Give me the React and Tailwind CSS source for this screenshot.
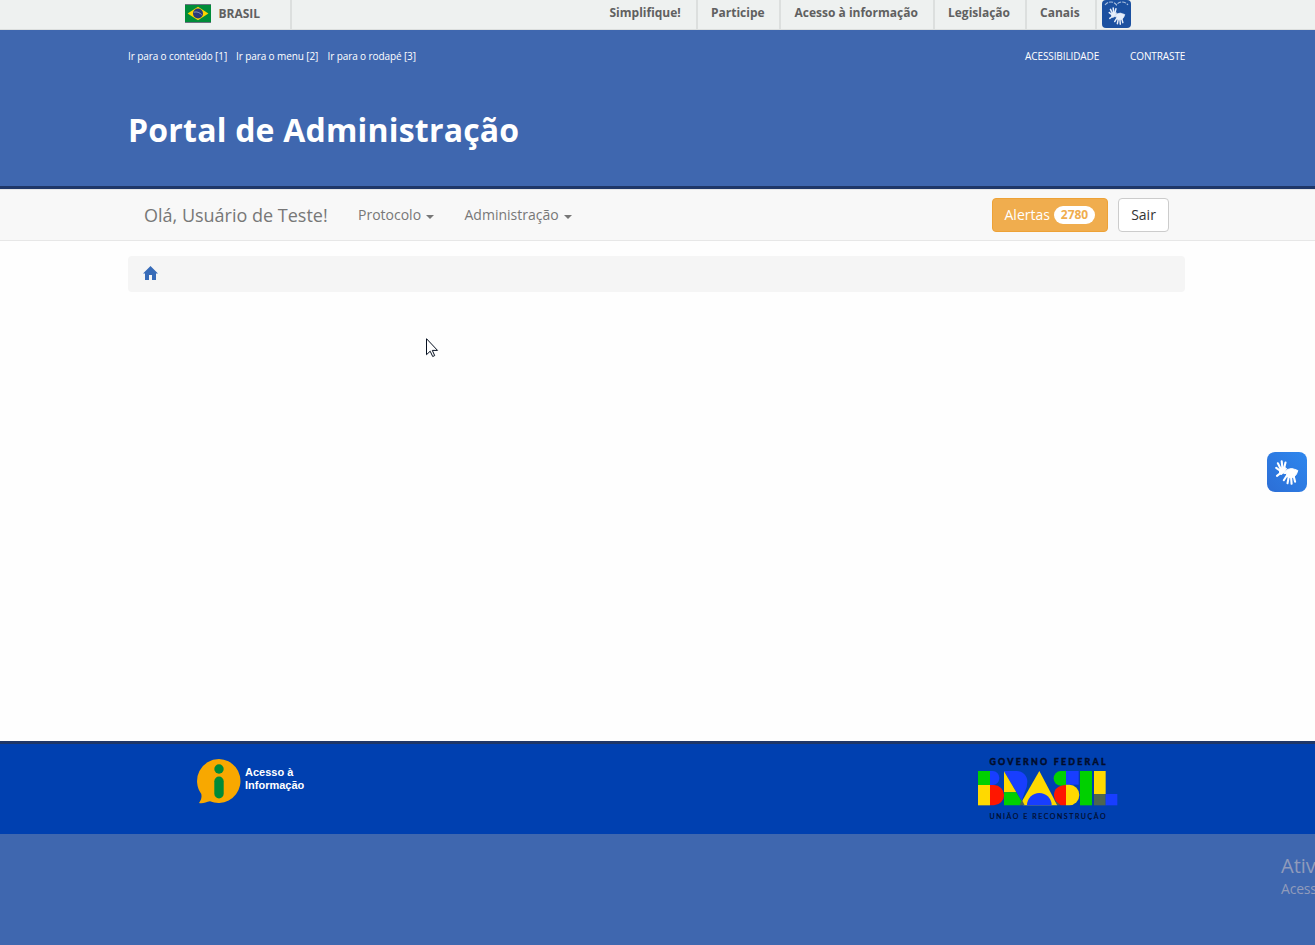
import React from 'react';

function Hands({ className }) {
  return (
    <svg className={className} viewBox="0 0 24 25" fill="none" stroke="currentColor" strokeLinecap="round" strokeLinejoin="round">
      <g strokeWidth="2.1">
        <path d="M5.500 11 1.200 7.800M6 9.500 2.900 3.300M7.500 9 6.700 1.300M8.800 9.500l1.700-7M2 15.800l3.500-2.600" />
        <path d="M18.500 15.500l1.600 6.200M16 16l.6 7.800M14 15.500l-1.500 7.700M12.500 14.500l-3.700 5.700" />
      </g>
      <path fill="currentColor" strokeWidth="1" d="M4.800 10.500 7 8.500l2.300.4 1.500-1.200.8 1-2.300 3-2.500 2.800L5 14z" />
      <path fill="currentColor" strokeWidth="1" d="M9 12.200l3.500-2.700 4-1 3 .8 3.300 1.200-1.300 3.500-2.500 3-3.500.8-3.500-1.200-.3-3.200-2.500.2z" />
    </svg>
  );
}

function Flag() {
  return (
    <svg className="mt-1 h-[19px] w-[26px]" viewBox="0 0 26 19">
      <path fill="#6b7280" d="M0 0h26v19H0z" />
      <path fill="#008c3a" d="M0 1h26v17H0z" />
      <path fill="#ffd500" d="M13 2.8 23.4 9.5 13 16.2 2.6 9.5z" />
      <circle cx="13" cy="9.5" r="5" fill="#2b3a78" />
      <path d="M8.800 8.200c3-.8 6 .2 8 2.800" stroke="#a9b3cf" fill="none" strokeWidth=".7" />
    </svg>
  );
}

function GovLogo() {
  return (
    <div className="flex w-[140px] flex-col text-[#020d2c]">
      <svg className="h-[11px] w-[140px] font-['Lato',sans-serif]" viewBox="0 0 140 11" fill="currentColor">
        <text x="11.500" y="7.700" textLength="116" fontSize="8.800" fontWeight="900" stroke="currentColor" strokeWidth=".4">GOVERNO FEDERAL</text>
      </svg>
      <svg className="mt-[3px] h-[35px] w-[140px]" viewBox="39 63 420 105">
        <path fill="#00d000" d="M39 63h36v42H39z" />
        <path fill="#ffd900" d="M39 105h36v61H39z" />
        <path fill="#183eff" d="M75 63h8a20 21 0 0 1 0 42h-8z" />
        <path fill="#ff1600" d="M75 105h12a30 30.500 0 0 1 0 61H75z" />
        <path fill="#183eff" d="M117 63h38a32 32 0 0 1 32 32q0 18-8 32l-9 25z" />
        <path fill="#ffd900" d="M117 64l37 63h-37z" />
        <path fill="#00d000" d="M117 127h37l18 30-6 9h-49z" />
        <path fill="#ffd900" d="M223 63l54 103h-102l-4-12z" />
        <path fill="#4d6650" d="M171 150l8 16h-16z" />
        <path fill="#183eff" d="M186 166a37 37 0 0 1 74 0z" />
        <path fill="#00d000" d="M303 63v44h-16a21 22 0 0 1 0-44z" />
        <path fill="#183eff" d="M303 63h38v41h-38z" />
        <path fill="#ff1600" d="M303 105v61h-16q-20-10-20-30 0-29 36-31z" />
        <path fill="#4d6650" d="M268 149l18 17h-9z" />
        <path fill="#ffd900" d="M303 104h10a30 31 0 0 1 0 62h-10z" />
        <path fill="#00d000" d="M345 63h36v103h-36z" />
        <path fill="#ffd900" d="M387 63h35v69h-35z" />
        <path fill="#4d6650" d="M387 132h35v34h-35z" />
        <path fill="#183eff" d="M422 132h35v34h-35z" />
      </svg>
      <svg className="mt-[6px] h-[9px] w-[140px] font-['Lato',sans-serif]" viewBox="0 0 140 9" fill="currentColor">
        <text x="11.500" y="7" textLength="116" fontSize="7" stroke="currentColor" strokeWidth=".2">UNIÃO E RECONSTRUÇÃO</text>
      </svg>
    </div>
  );
}

function Caret() {
  return <span className="mt-[3px] ml-[5px] border-x-4 border-t-4 border-x-transparent border-t-[#777]" />;
}

export default function App() {
  return (
    <div className="relative flex h-[945px] w-[1315px] flex-col overflow-hidden bg-[#fefefe] font-['Open_Sans',sans-serif] whitespace-nowrap">
      <div className="flex h-[30px] border-b border-[#dcdfde] bg-[#eef1f0] text-xs font-bold text-[#606060]">
        <div className="ml-[185px] flex w-[107px] border-r-2 border-[#dcdfde]">
          <Flag />
          <span className="ml-[7.500px] leading-[27px]">BRASIL</span>
        </div>
        <div className="ml-[304px] flex leading-[26px]">
          <span className="w-[102px] border-r-2 border-[#dcdfde] pl-[13.500px]">Simplifique!</span>
          <span className="w-[83px] border-r-2 border-[#dcdfde] pl-[13px]">Participe</span>
          <span className="w-[154px] border-r-2 border-[#dcdfde] pl-[13.500px]">Acesso à informação</span>
          <span className="w-[92px] border-r-2 border-[#dcdfde] pl-[13px]">Legislação</span>
          <span className="w-[70px] border-r-2 border-[#dcdfde] pl-[13px]">Canais</span>
        </div>
        <div className="ml-[5px] flex h-7 w-[29px] flex-col items-center rounded-[4px] bg-[#1b50a0] text-[#e6eefa]">
          <svg className="h-[7px] w-[25px]" viewBox="0 0 25 7" fill="none" stroke="#a9bfdf" strokeWidth="1.1" strokeDasharray="4 1"><path d="M1 5c3-4 9-4 11.500 0C15 1 21 1 24 5" /></svg>
          <Hands className="h-[18px] w-[18px]" />
        </div>
      </div>

      <header className="h-[159px] border-b-[3px] border-[#1f3768] bg-[#3f67af] text-white">
        <div className="ml-32 flex w-[1057px] items-start pt-4 text-[10px] leading-[20px] font-medium tracking-[-0.1px]">
          <span className="w-[108px]">Ir para o conteúdo [1]</span>
          <span className="w-[91.500px]">Ir para o menu [2]</span>
          <span>Ir para o rodapé [3]</span>
          <span className="ml-auto w-[105px]">ACESSIBILIDADE</span>
          <span className="w-[55px]">CONTRASTE</span>
        </div>
        <h1 className="ml-32 pt-[39px] text-[32px] leading-[49px] font-bold tracking-[0.2px]">Portal de Administração</h1>
      </header>

      <nav className="h-[52px] border-y border-[#e7e7e7] bg-[#f8f8f8] text-sm text-[#777]">
        <div className="ml-32 flex h-[50px] w-[1057px] items-center px-4">
          <span className="w-[214px] text-lg leading-[20px]">Olá, Usuário de Teste!</span>
          <div className="flex w-[106.500px] items-center">Protocolo<Caret /></div>
          <div className="flex items-center">Administração<Caret /></div>
          <button className="ml-auto flex h-[34px] w-[116px] items-center rounded-[4px] border border-[#eea236] bg-[#f0ad4e] pl-[11.500px] text-white">
            <span className="w-[45px]">Alertas</span>
            <span className="ml-[4.500px] flex h-[18px] w-[41px] items-center justify-center rounded-full bg-white text-xs font-bold text-[#f0ad4e]">2780</span>
          </button>
          <button className="ml-[10px] flex h-[34px] w-[51px] items-center justify-center rounded-[4px] border border-[#ccc] bg-white text-[#333]">Sair</button>
        </div>
      </nav>

      <main className="h-[500px] pt-[15px]">
        <div className="ml-32 flex h-9 w-[1057px] rounded-[4px] bg-[#f5f5f5]">
          <svg className="mt-[10px] ml-[15px] h-[14px] w-[15px]" viewBox="0 0 15 14" fill="#376bb8">
            <path d="M7.500 0 15 7.500h-2V14H9V9H6v5H2V7.500H0z" />
          </svg>
        </div>
      </main>

      <footer className="h-[93px] border-t-[3px] border-[#1f3768] bg-[#0040b0]">
        <div className="flex h-full items-start pl-[197px]">
          <svg className="mt-[15px] h-[45px] w-[44px]" viewBox="0 0 44 45">
            <path fill="#f8a800" d="M22 0a22 22 0 1 1-9 42.300C9 43 6 45 2 44c2-3 3-5 2.300-9A22 22 0 0 1 22 0z" />
            <circle cx="22" cy="10" r="4.700" fill="#008a37" />
            <rect x="17.300" y="17.500" width="9.400" height="22" rx="4.700" fill="#008a37" />
          </svg>
          <p className="mt-[22px] ml-1 font-['Liberation_Sans',sans-serif] text-[11px] leading-[13px] font-bold text-white">Acesso à<br />Informação</p>
          <div className="mt-[13px] ml-auto mr-[197px]"><GovLogo /></div>
        </div>
      </footer>
      <div className="flex h-[111px] justify-end overflow-hidden bg-[#3f67af]">
        <div className="mt-[18px] w-[34px] text-[#909bbb]">
          <p className="text-[20px] leading-[28px]">Ativ</p>
          <p className="text-[14px] leading-[18px] tracking-[-0.2px]">Acess</p>
        </div>
      </div>

      <div className="absolute top-[452px] left-[1267px] flex h-10 w-10 items-center justify-center rounded-[8px] bg-gradient-to-tr from-[#2c6ed6] to-[#2e87ee] text-white">
        <Hands className="h-[25px] w-[24px]" />
      </div>
      <svg className="absolute top-[338px] left-[426px] h-5 w-[13px]" viewBox="0 0 13 20">
        <path d="M.5.7v16l3.700-3.500 2.500 5.300 2-.9-2.400-5.200h5.200z" fill="#fff" stroke="#061020" />
      </svg>
    </div>
  );
}
